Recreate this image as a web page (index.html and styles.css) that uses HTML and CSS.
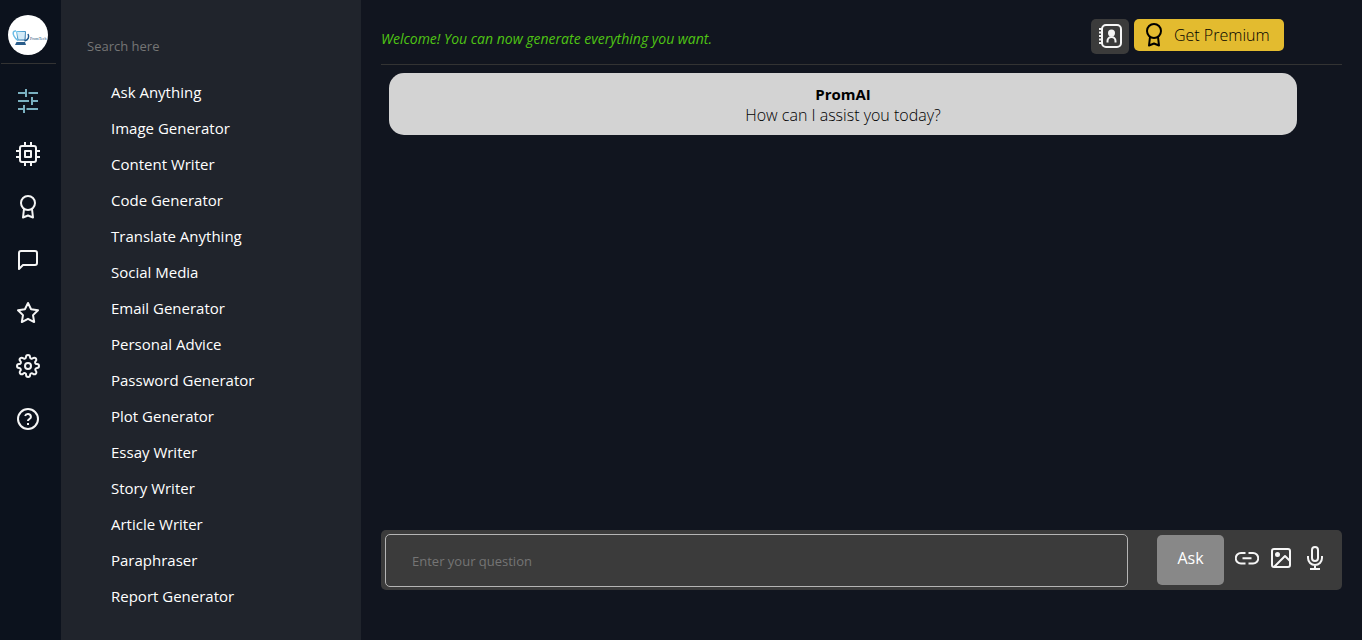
FILE: index.html
```html
<!DOCTYPE html>
<html lang="en">
<head>
    <meta charset="UTF-8">
    <meta name="viewport" content="width=device-width, initial-scale=1.0">
    <title>PromAI</title>
    <link rel="stylesheet" href="styles.css">
</head>
<body>
    <nav class="rail" aria-label="Main">
        <a class="logo" href="#" aria-label="PromTech">
            <svg width="40" height="40" viewBox="0 0 40 40">
                <defs>
                    <linearGradient id="cup" x1="0" y1="0" x2="1" y2="1">
                        <stop offset="0" stop-color="#6cc4ec"/>
                        <stop offset="1" stop-color="#1f5f96"/>
                    </linearGradient>
                </defs>
                <path d="M8.500 16.500H17.500L17 25H10z" fill="#d3ebf8" stroke="url(#cup)"/>
                <path d="M8 16c-3-.5-3.500 2-2 5 1 2 2 3.500 4 4.500" fill="none" stroke="#6cbde6" stroke-width="1.500"/>
                <path d="M20 19c1.500 3 .5 5.500-3.500 7" fill="none" stroke="#1f5a8c" stroke-width="1.500"/>
                <path d="M8.500 27H17l1 3H7z" fill="#2a5d8a"/>
                <text class="logo-text" x="22" y="25">PromTech</text>
            </svg>
        </a>
        <ul class="rail-list">
            <li><a class="rail-link active" href="#" aria-label="Tools"><svg class="icon" viewBox="0 0 24 24"><path d="M2 4h8M12.500 4H22M2 12h11M16 12h6M2 20h6M10.500 20H22M10 0v8M16 8v8M8 16v8"/></svg></a></li>
            <li><a class="rail-link" href="#" aria-label="Models"><svg class="icon" viewBox="0 0 24 24"><rect x="4" y="4" width="16" height="16" rx="2"/><path d="M9 9h6v6H9zM9 0v4M15 0v4M9 20v4M15 20v4M20 9h4M20 15h4M0 9h4M0 15h4"/></svg></a></li>
            <li><a class="rail-link" href="#" aria-label="Premium"><svg class="icon" viewBox="0 0 24 24"><circle cx="12" cy="8" r="7"/><path d="M8 14l-1 8.500 5-2 5 2-1-8.500"/></svg></a></li>
            <li><a class="rail-link" href="#" aria-label="Chats"><svg class="icon" viewBox="0 0 24 24"><path d="M21 15a2 2 0 0 1-2 2H7l-4 4V5a2 2 0 0 1 2-2h14a2 2 0 0 1 2 2z"/></svg></a></li>
            <li><a class="rail-link" href="#" aria-label="Favourites"><svg class="icon" viewBox="0 0 24 24"><path d="M12 2l3.090 6.260L22 9.270l-5 4.870 1.180 6.880L12 17.770l-6.180 3.250L7 14.140 2 9.270l6.910-1.010z"/></svg></a></li>
            <li><a class="rail-link" href="#" aria-label="Settings"><svg class="icon" viewBox="0 0 24 24"><circle cx="12" cy="12" r="3"/><path d="M19.400 15a1.650 1.650 0 0 0 .33 1.820l.06.06a2 2 0 1 1-2.830 2.830l-.06-.06a1.650 1.650 0 0 0-2.800 1.170V21a2 2 0 0 1-4 0v-.09a1.650 1.650 0 0 0-2.900-1.260l-.06.06a2 2 0 1 1-2.830-2.830l.06-.06a1.650 1.650 0 0 0-1.170-2.800H3a2 2 0 0 1 0-4h.09a1.650 1.650 0 0 0 1.260-2.900l-.06-.06a2 2 0 1 1 2.830-2.830l.06.06a1.650 1.650 0 0 0 2.820-1.200V3a2 2 0 0 1 4 0v.09a1.650 1.650 0 0 0 2.820 1.200l.06-.06a2 2 0 1 1 2.830 2.830l-.06.06a1.650 1.650 0 0 0 1.260 2.900H21a2 2 0 0 1 0 4h-.09a1.650 1.650 0 0 0-1.510 1z"/></svg></a></li>
            <li><a class="rail-link" href="#" aria-label="Help"><svg class="icon" viewBox="0 0 24 24"><circle cx="12" cy="12" r="10"/><path d="M9.090 9a3 3 0 0 1 5.830 1c0 2-3 2-3 4M12 16v2"/></svg></a></li>
        </ul>
    </nav>

    <aside class="panel">
        <input class="search" type="search" placeholder="Search here" aria-label="Search">
        <ul class="tools">
            <li><a href="#">Ask Anything</a></li>
            <li><a href="#">Image Generator</a></li>
            <li><a href="#">Content Writer</a></li>
            <li><a href="#">Code Generator</a></li>
            <li><a href="#">Translate Anything</a></li>
            <li><a href="#">Social Media</a></li>
            <li><a href="#">Email Generator</a></li>
            <li><a href="#">Personal Advice</a></li>
            <li><a href="#">Password Generator</a></li>
            <li><a href="#">Plot Generator</a></li>
            <li><a href="#">Essay Writer</a></li>
            <li><a href="#">Story Writer</a></li>
            <li><a href="#">Article Writer</a></li>
            <li><a href="#">Paraphraser</a></li>
            <li><a href="#">Report Generator</a></li>
        </ul>
    </aside>

    <main class="main">
        <header class="header">
            <p class="welcome">Welcome! You can now generate everything you want.</p>
            <div class="actions">
                <button class="contacts" type="button" aria-label="Contacts"><svg class="icon" viewBox="0 0 24 24"><rect x="4" y="1" width="19" height="22" rx="4"/><path d="M1 5h4M1 8.500h4M1 12h4M1 15.500h4M1 19h4M9.500 18.500V17a4 4 0 0 1 8 0v1.500"/><circle cx="13.500" cy="9" r="2.500" fill="currentColor"/></svg></button>
                <button class="premium" type="button"><svg class="icon" viewBox="0 0 24 24"><circle cx="12" cy="8" r="7"/><path d="M8 14l-1 8.500 5-2 5 2-1-8.500"/></svg>Get Premium</button>
            </div>
        </header>

        <section class="chat">
            <div class="message">
                <strong>PromAI</strong>
                <p>How can I assist you today?</p>
            </div>
        </section>

        <form class="composer">
            <input class="question" type="text" placeholder="Enter your question" aria-label="Your question">
            <button class="ask" type="submit">Ask</button>
            <button class="tool" type="button" aria-label="Add link"><svg class="icon" viewBox="0 0 24 24"><path d="M10.500 7H6A5 5 0 0 0 6 17.500h4.500M13.500 7H18a5 5 0 0 1 0 10.500h-4.500M7.500 12.250h9"/></svg></button>
            <button class="tool" type="button" aria-label="Add image"><svg class="icon" viewBox="0 0 24 24"><rect x="3" y="3" width="18" height="18" rx="2"/><circle cx="8.500" cy="8.500" r="1.500" fill="currentColor"/><path d="M21 15l-5-5L5 21"/></svg></button>
            <button class="tool" type="button" aria-label="Record"><svg class="icon" viewBox="0 0 24 24"><rect x="9" y="1" width="6" height="14" rx="3"/><path d="M5 10v2a7 7 0 0 0 14 0v-2M12 19v4M7 23h10"/></svg></button>
        </form>
    </main>
</body>
</html>
```
FILE: styles.css
```css
* {
    box-sizing: border-box;
}

body {
    margin: 0;
    min-height: 100vh;
    display: flex;
    background: #11151f;
    color: #fff;
    font-family: "Segoe UI", "Open Sans", sans-serif;
    font-size: 15px;
    line-height: 21px;
}

button,
input {
    font: inherit;
    border: none;
}

button {
    cursor: pointer;
}

ul {
    list-style: none;
    margin: 0;
    padding: 0;
}

p {
    margin: 0;
}

.icon {
    display: block;
    width: 24px;
    height: 24px;
    fill: none;
    stroke: currentColor;
    stroke-width: 2;
    stroke-linejoin: round;
}

/* icon rail */
.rail {
    width: 61px;
    flex-shrink: 0;
    padding: 15px 5px 0 1px;
    background: #0c121d;
}

.logo {
    display: block;
    padding: 0 7px 8px;
    border-bottom: 1px solid #333;
}

.logo svg {
    display: block;
    background: #fff;
    border-radius: 50%;
}

.logo-text {
    font-family: "Liberation Serif", serif;
    font-size: 4px;
    fill: #1d4a7a;
}

.rail-list {
    display: flex;
    flex-direction: column;
    gap: 29px;
    padding: 25px 15px 0;
}

.rail-link {
    display: block;
    color: #f5f5f5;
}

.rail-link.active {
    color: #7ab0c0;
}

/* tools panel */
.panel {
    width: 300px;
    flex-shrink: 0;
    padding: 26px 20px 20px;
    background: #20242c;
}

.search {
    display: block;
    width: 100%;
    height: 40px;
    padding: 0 6px;
    background: none;
    color: #fff;
    font-size: 13px;
}

.search::placeholder,
.question::placeholder {
    color: #757575;
}

.tools {
    padding: 8px 30px 0;
}

.tools a {
    display: block;
    line-height: 36px;
    color: #fff;
    text-decoration: none;
}

/* chat */
.main {
    flex: 1;
    display: flex;
    flex-direction: column;
    padding: 0 20px 50px;
}

.header {
    display: flex;
    justify-content: space-between;
    height: 65px;
    padding: 19px 58px 0 0;
    border-bottom: 1px solid #333;
}

.welcome {
    padding-top: 9px;
    color: #4fc414;
    font-size: 14px;
    font-style: italic;
}

.actions {
    display: flex;
    align-items: flex-start;
    gap: 5px;
}

.contacts {
    padding: 5px 7px 6px;
    border-radius: 5px;
    background: #3b3b3b;
    color: #f5f5f5;
}

.premium {
    display: flex;
    align-items: center;
    gap: 8px;
    width: 150px;
    height: 32px;
    padding: 0 8px;
    border-radius: 5px;
    background: #e3bb2f;
    color: #000;
    font-size: 16px;
    font-weight: 300;
    white-space: nowrap;
}

.chat {
    flex: 1;
    padding: 8px 45px 0 8px;
}

.message {
    padding: 11px 10px 9px;
    border-radius: 15px;
    background: #d3d3d3;
    color: #000;
    text-align: center;
}

.message p {
    font-size: 16px;
    font-weight: 300;
}

.composer {
    display: flex;
    align-items: flex-start;
    height: 60px;
    padding: 4px 10px 0 4px;
    border-radius: 5px;
    background: #3b3b3b;
}

.question {
    flex: 1;
    height: 53px;
    margin-right: 29px;
    padding: 0 26px;
    border: 1px solid #b5b5b5;
    border-radius: 5px;
    background: none;
    color: #fff;
    font-size: 13px;
}

.ask {
    width: 67px;
    height: 50px;
    margin: 1px 6px 0 0;
    padding: 0 0 4px;
    border-radius: 5px;
    background: #888;
    color: #fff;
    font-size: 16px;
}

.tool {
    padding: 12px 5px;
    background: none;
    color: #f5f5f5;
}
```
